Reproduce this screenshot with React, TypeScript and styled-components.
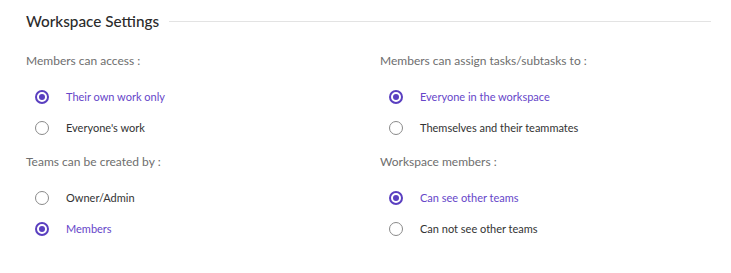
import React, { useState } from "react";
import styled, { createGlobalStyle } from "styled-components";

const Global = createGlobalStyle`
  body { margin: 0; background: #fff; font-family: "Lato", "Noto Sans", sans-serif; }
`;

const Page = styled.div`
  width: 731px;
  height: 273px;
  box-sizing: border-box;
  padding: 12px 20px 0 26px;
`;

const TitleRow = styled.div`
  display: flex;
  align-items: center;
  gap: 10px;
  height: 18px;
`;

const Title = styled.h2`
  margin: 0;
  font-size: 15.3px;
  font-weight: 500;
  color: #2b2b2b;
  white-space: nowrap;
`;

const Rule = styled.div`
  flex: 1;
  height: 1px;
  background: #e3e3e3;
`;

const Grid = styled.div`
  display: grid;
  grid-template-columns: 354px 1fr;
  margin-top: 23px;
  row-gap: 11px;
`;

const Group = styled.div`
  display: flex;
  flex-direction: column;
`;

const GroupLabel = styled.div`
  font-size: 12px;
  color: #6e6e6e;
  height: 16px;
  line-height: 16px;
  margin-bottom: 12px;
`;

const Option = styled.label`
  display: flex;
  align-items: center;
  gap: 17px;
  height: 31px;
  padding-left: 9px;
  cursor: pointer;
`;

const Radio = styled.span<{ $on: boolean }>`
  width: 14px;
  height: 14px;
  box-sizing: border-box;
  border-radius: 50%;
  border: ${(p) => (p.$on ? "2px solid #5a3fc0" : "1.5px solid #8a8a8a")};
  display: flex;
  align-items: center;
  justify-content: center;
  &::after {
    content: "";
    display: ${(p) => (p.$on ? "block" : "none")};
    width: 6px;
    height: 6px;
    border-radius: 50%;
    background: #5a3fc0;
  }
`;

const OptionText = styled.span<{ $on: boolean }>`
  font-size: 11px;
  color: ${(p) => (p.$on ? "#6646c9" : "#333")};
`;

type G = { label: string; options: string[]; initial: number };

const groups: G[] = [
  { label: "Members can access :", options: ["Their own work only", "Everyone's work"], initial: 0 },
  { label: "Members can assign tasks/subtasks to :", options: ["Everyone in the workspace", "Themselves and their teammates"], initial: 0 },
  { label: "Teams can be created by :", options: ["Owner/Admin", "Members"], initial: 1 },
  { label: "Workspace members :", options: ["Can see other teams", "Can not see other teams"], initial: 0 },
];

function RadioGroup({ g }: { g: G }) {
  const [sel, setSel] = useState(g.initial);
  return (
    <Group>
      <GroupLabel>{g.label}</GroupLabel>
      {g.options.map((o, i) => (
        <Option key={o} onClick={() => setSel(i)}>
          <Radio $on={sel === i} />
          <OptionText $on={sel === i}>{o}</OptionText>
        </Option>
      ))}
    </Group>
  );
}

export default function App() {
  return (
    <>
      <Global />
      <Page>
        <TitleRow>
          <Title>Workspace Settings</Title>
          <Rule />
        </TitleRow>
        <Grid>
          {groups.map((g) => (
            <RadioGroup key={g.label} g={g} />
          ))}
        </Grid>
      </Page>
    </>
  );
}
